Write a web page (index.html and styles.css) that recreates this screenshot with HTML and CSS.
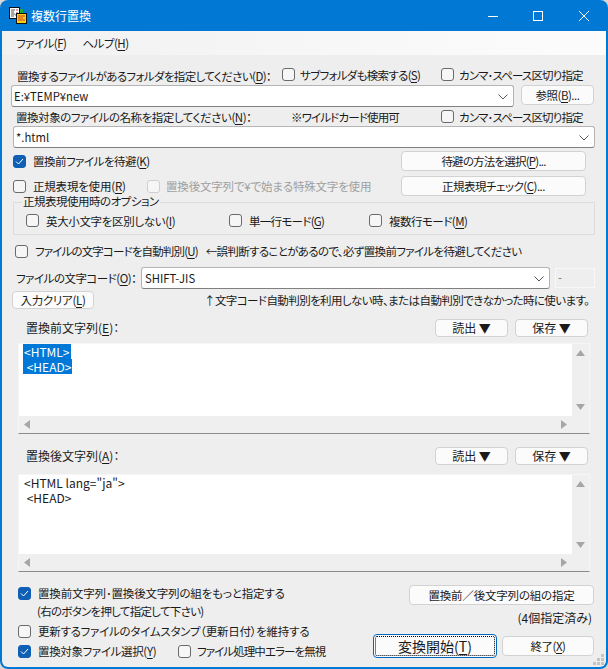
FILE: index.html
```html
<!DOCTYPE html>
<html lang="ja">
<head>
  <meta charset="UTF-8">
  <title>複数行置換</title>
  <link rel="stylesheet" href="styles.css">
</head>
<body>
  <div class="window">
    <div class="titlebar">
      <svg class="app-icon" width="18" height="17" viewBox="0 0 18 17">
        <rect x="0.5" y="0.5" width="10" height="11" fill="#fff" stroke="#111"/>
        <path d="M2 3h4M2 5h3M2 7h4M2 9h3" stroke="#555"/>
        <path d="M7 3h2M7 6h2M6 8h2" stroke="#e0304a"/>
        <rect x="7.5" y="6.5" width="10" height="10" fill="#f5d312" stroke="#111"/>
        <rect x="11" y="2" width="3" height="4" fill="#22a83a"/>
        <path d="M9 9h7M9 11h5M9 13h7" stroke="#d9372a"/>
      </svg>
      <span class="title">複数行置換</span>
      <svg class="win-btn btn-min" width="10" height="10" viewBox="0 0 10 10"><path d="M0 5.5h10" stroke="#fff"/></svg>
      <svg class="win-btn btn-max" width="10" height="10" viewBox="0 0 10 10"><rect x="0.5" y="0.5" width="9" height="9" fill="none" stroke="#fff"/></svg>
      <svg class="win-btn btn-close" width="10" height="10" viewBox="0 0 10 10"><path d="M0 0l10 10M10 0L0 10" stroke="#fff"/></svg>
    </div>
    <div class="menubar">
      <span class="menu-item">ファイル(<u>F</u>)</span>
      <span class="menu-item">ヘルプ(<u>H</u>)</span>
    </div>
    <div class="content">
      <div class="row row-folder-label">
        <span class="lbl lbl-folder">置換するファイルがあるフォルダを指定してください(<u>D</u>)：</span>
        <label class="check chk-sub"><span class="box"></span>サブフォルダも検索する(<u>S</u>)</label>
        <label class="check chk-comma"><span class="box"></span>カンマ･スペース区切り指定</label>
      </div>
      <div class="row row-folder">
        <div class="combo combo-folder">E:¥TEMP¥new
          <svg class="chev" width="10" height="6" viewBox="0 0 10 6"><path d="M0.5 0.5L5 5l4.5-4.5" fill="none" stroke="#555"/></svg>
        </div>
        <button class="btn btn-browse">参照(<u>B</u>)...</button>
      </div>
      <div class="row row-name-label">
        <span class="lbl lbl-name">置換対象のファイルの名称を指定してください(<u>N</u>)：</span>
        <span class="lbl lbl-wild">※ワイルドカード使用可</span>
        <label class="check chk-comma"><span class="box"></span>カンマ･スペース区切り指定</label>
      </div>
      <div class="row row-name">
        <div class="combo combo-name">*.html
          <svg class="chev" width="10" height="6" viewBox="0 0 10 6"><path d="M0.5 0.5L5 5l4.5-4.5" fill="none" stroke="#555"/></svg>
        </div>
      </div>
      <div class="row row-backup">
        <label class="check"><span class="box on"><svg width="9" height="7" viewBox="0 0 9 7"><path d="M1 3.500L3.500 6 8 1" fill="none" stroke="#fff"/></svg></span>置換前ファイルを待避(<u>K</u>)</label>
        <button class="btn btn-side btn-method">待避の方法を選択(<u>P</u>)...</button>
      </div>
      <div class="row row-regex">
        <label class="check chk-regex"><span class="box"></span>正規表現を使用(<u>R</u>)</label>
        <label class="check disabled chk-escape"><span class="box"></span>置換後文字列で¥で始まる特殊文字を使用</label>
        <button class="btn btn-side">正規表現チェック(<u>C</u>)...</button>
      </div>
      <fieldset class="group">
        <legend>正規表現使用時のオプション</legend>
        <label class="check opt1"><span class="box"></span>英大小文字を区別しない(<u>I</u>)</label>
        <label class="check opt2"><span class="box"></span>単一行モード(<u>G</u>)</label>
        <label class="check opt3"><span class="box"></span>複数行モード(<u>M</u>)</label>
      </fieldset>
      <div class="row row-auto">
        <label class="check chk-auto"><span class="box"></span>ファイルの文字コードを自動判別(<u>U</u>)</label>
        <span class="lbl lbl-warn">←誤判断することがあるので、必ず置換前ファイルを待避してください</span>
      </div>
      <div class="row row-code">
        <span class="lbl lbl-code">ファイルの文字コード(<u>O</u>)：</span>
        <div class="combo combo-code">SHIFT-JIS
          <svg class="chev" width="10" height="6" viewBox="0 0 10 6"><path d="M0.5 0.5L5 5l4.5-4.5" fill="none" stroke="#555"/></svg>
        </div>
        <div class="code-out">-</div>
      </div>
      <div class="row row-clear">
        <button class="btn btn-clear">入力クリア(<u>L</u>)</button>
        <span class="lbl lbl-hint">↑文字コード自動判別を利用しない時、または自動判別できなかった時に使います。</span>
      </div>

      <div class="row row-memo-head">
        <span class="lbl lbl-memo">置換前文字列(<u>E</u>)：</span>
        <button class="btn btn-load">読出 ▼</button>
        <button class="btn btn-save">保存 ▼</button>
      </div>
      <div class="memo memo-before">
        <div class="memo-text"><span class="sel">&lt;HTML&gt;</span><br><span class="sel">&nbsp;&lt;HEAD&gt;</span></div>
        <div class="vbar">
          <svg width="9" height="6" viewBox="0 0 9 6"><path d="M4.500 0L9 6H0z" fill="#a6a6a6"/></svg>
          <svg width="9" height="6" viewBox="0 0 9 6"><path d="M4.500 6L9 0H0z" fill="#a6a6a6"/></svg>
        </div>
        <div class="hbar">
          <svg width="6" height="9" viewBox="0 0 6 9"><path d="M0 4.500L6 0v9z" fill="#a6a6a6"/></svg>
          <svg width="6" height="9" viewBox="0 0 6 9"><path d="M6 4.500L0 0v9z" fill="#a6a6a6"/></svg>
        </div>
        <div class="corner"></div>
      </div>

      <div class="row row-memo-head head-after">
        <span class="lbl lbl-memo">置換後文字列(<u>A</u>)：</span>
        <button class="btn btn-load">読出 ▼</button>
        <button class="btn btn-save">保存 ▼</button>
      </div>
      <div class="memo memo-after">
        <div class="memo-text">&lt;HTML lang="ja"&gt;<br>&nbsp;&lt;HEAD&gt;</div>
        <div class="vbar">
          <svg width="9" height="6" viewBox="0 0 9 6"><path d="M4.500 0L9 6H0z" fill="#a6a6a6"/></svg>
          <svg width="9" height="6" viewBox="0 0 9 6"><path d="M4.500 6L9 0H0z" fill="#a6a6a6"/></svg>
        </div>
        <div class="hbar">
          <svg width="6" height="9" viewBox="0 0 6 9"><path d="M0 4.500L6 0v9z" fill="#a6a6a6"/></svg>
          <svg width="6" height="9" viewBox="0 0 6 9"><path d="M6 4.500L0 0v9z" fill="#a6a6a6"/></svg>
        </div>
        <div class="corner"></div>
      </div>

      <div class="bottom">
        <div class="bottom-left">
          <label class="check line chk-more"><span class="box on"><svg width="9" height="7" viewBox="0 0 9 7"><path d="M1 3.500L3.500 6 8 1" fill="none" stroke="#fff"/></svg></span>置換前文字列･置換後文字列の組をもっと指定する</label>
          <div class="lbl line note">(右のボタンを押して指定して下さい)</div>
          <label class="check line line-stamp"><span class="box"></span>更新するファイルのタイムスタンプ（更新日付）を維持する</label>
          <div class="line line-last">
            <label class="check chk-target"><span class="box on"><svg width="9" height="7" viewBox="0 0 9 7"><path d="M1 3.500L3.500 6 8 1" fill="none" stroke="#fff"/></svg></span>置換対象ファイル選択(<u>Y</u>)</label>
            <label class="check chk-ignore"><span class="box"></span>ファイル処理中エラーを無視</label>
          </div>
        </div>
        <div class="bottom-right">
          <button class="btn btn-pairs">置換前／後文字列の組の指定</button>
          <div class="lbl pairs-count">(4個指定済み)</div>
          <div class="actions">
            <button class="btn btn-start"><span class="focus-ring">変換開始(<u>T</u>)</span></button>
            <button class="btn btn-end">終了(<u>X</u>)</button>
          </div>
        </div>
      </div>
      <svg class="grip" width="12" height="12" viewBox="0 0 12 12">
        <path d="M8 0h3v3H8zM4 4h3v3H4zM8 4h3v3H8zM0 8h3v3H0zM4 8h3v3H4zM8 8h3v3H8z" fill="#c4c4c4"/>
      </svg>
    </div>
  </div>
</body>
</html>
```

FILE: styles.css
```css
html, body {
  margin: 0;
  height: 100%;
  background: #d8d8d8;
}
body {
  font-family: "Noto Sans CJK JP", "Noto Sans", sans-serif;
  font-size: 11.5px;
  font-feature-settings: "palt";
  color: #1a1a1a;
  line-height: 16px;
}
u {
  text-underline-offset: 2px;
}
.window {
  width: 608px;
  height: 669px;
  box-sizing: border-box;
  display: flex;
  flex-direction: column;
  background: #0078d4;
  border-radius: 8px;
  overflow: hidden;
  padding: 0 2px 2px;
}
.titlebar {
  height: 31px;
  flex: none;
  display: flex;
  align-items: center;
  margin: 0 -2px;
  color: #fff;
}
.app-icon {
  margin-left: 9px;
}
.title {
  margin-left: 4px;
  font-size: 12px;
}
.win-btn {
  flex: none;
}
.btn-min {
  margin-left: auto;
}
.btn-max {
  margin-left: 35px;
}
.btn-close {
  margin-left: 36px;
  margin-right: 19px;
}
.menubar {
  height: 24px;
  flex: none;
  display: flex;
  align-items: center;
  background: linear-gradient(to right, #f1f1f1, #fcfcfc);
  padding-left: 14px;
  gap: 20px;
}
.menu-item {
  margin-right: -4px;
}
.menu-item,
.lbl,
.check,
.btn,
.group legend {
  letter-spacing: -0.5px;
}
.content {
  flex: 1;
  position: relative;
  background: #eeeeee;
  padding-top: 12px;
  border-radius: 0 0 6px 6px;
}

.row {
  display: flex;
  align-items: center;
}
.lbl {
  white-space: nowrap;
}
.check {
  display: inline-flex;
  align-items: center;
  white-space: nowrap;
}
.box {
  flex: none;
  box-sizing: border-box;
  width: 13px;
  height: 13px;
  border: 1px solid #6a6a6a;
  border-radius: 3px;
  background: #f6f6f6;
  margin-right: 7px;
  display: flex;
  align-items: center;
  justify-content: center;
}
.box.on {
  background: #0f5fb5;
  border-color: #0f5fb5;
}
.disabled {
  color: #a0a0a0;
}
.disabled .box {
  border-color: #cfcfcf;
}

.btn {
  font: inherit;
  font-feature-settings: inherit;
  color: inherit;
  box-sizing: border-box;
  background: #fbfbfb;
  border: 1px solid #d2d2d2;
  border-radius: 4px;
  padding: 0;
  white-space: nowrap;
}
.combo {
  position: relative;
  box-sizing: border-box;
  height: 22px;
  background: #fff;
  border: 1px solid #b4b4b4;
  border-bottom-color: #808080;
  border-radius: 3px;
  font-size: 11.3px;
  line-height: 20px;
  padding-left: 2px;
}
.chev {
  position: absolute;
  right: 5px;
  top: 8px;
}

.row-folder-label {
  height: 18px;
  padding-left: 15px;
}
.row-folder-label .check {
  margin-bottom: 3px;
}
.lbl-folder {
  width: 265px;
  letter-spacing: -0.62px;
}
.chk-sub {
  width: 159px;
  letter-spacing: -0.7px;
}
.chk-sub .box,
.chk-comma .box {
  margin-right: 5px;
}
.chk-comma {
  letter-spacing: -0.85px;
}
.row-folder {
  height: 22px;
  padding-left: 9px;
  align-items: flex-start;
}
.combo-folder {
  width: 503px;
}
.btn-browse {
  width: 73px;
  height: 20px;
  margin-left: 7px;
}
.row-name-label {
  height: 19px;
  padding-left: 14px;
}
.lbl-name {
  width: 275px;
  letter-spacing: -0.45px;
}
.lbl-wild {
  width: 150px;
  letter-spacing: -0.85px;
}
.row-name {
  height: 22px;
  padding-left: 11px;
}
.combo-name {
  width: 582px;
}
.row-backup {
  height: 20px;
  margin-top: 3px;
  padding-left: 11px;
}
.row-backup .btn-side {
  margin-left: auto;
}
.btn-side {
  width: 185px;
  height: 20px;
  margin-right: 20px;
}
.btn-method {
  letter-spacing: -0.8px;
}
.row-regex {
  height: 20px;
  margin-top: 5px;
  padding-left: 11px;
}
.chk-regex {
  width: 134px;
  letter-spacing: -0.2px;
}
.chk-escape {
  letter-spacing: -0.18px;
}
.chk-escape .box {
  margin-right: 6px;
}
.row-regex .btn-side {
  margin-left: auto;
}

.group {
  margin: -1px 11px 0;
  height: 40px;
  box-sizing: border-box;
  border: 1px solid #dcdcdc;
  padding: 0 0 2px;
  display: flex;
  align-items: center;
  min-width: 0;
}
.group legend {
  margin-left: 8px;
  padding: 0 1px 2px;
  line-height: 12px;
}
.opt1 {
  margin-left: 12px;
  width: 203px;
  letter-spacing: -0.35px;
}
.opt2 {
  width: 140px;
  letter-spacing: -0.7px;
}

.row-auto {
  height: 18px;
  margin-top: 7px;
  padding-left: 13px;
}
.chk-auto {
  letter-spacing: -0.85px;
}
.lbl-warn {
  margin-left: 8px;
  letter-spacing: -0.66px;
}
.row-code {
  height: 22px;
  margin-top: 7px;
  padding-left: 14px;
}
.lbl-code {
  width: 125px;
}
.combo-code {
  width: 409px;
  padding-left: 3px;
}
.code-out {
  box-sizing: border-box;
  width: 40px;
  height: 20px;
  margin-left: 5px;
  border: 1px solid #f8f8f8;
  color: #777;
  padding-left: 2px;
}
.row-clear {
  height: 18px;
  margin-top: 2px;
  padding-left: 10px;
}
.btn-clear {
  width: 82px;
  height: 18px;
  line-height: 16px;
  letter-spacing: -0.3px;
}
.lbl-hint {
  margin-left: 110px;
  letter-spacing: -0.58px;
}

.row-memo-head {
  height: 18px;
  margin-top: 10px;
  padding-left: 24px;
}
.head-after {
  margin-top: 13px;
}
.lbl-memo {
  width: 409px;
  font-size: 12px;
  letter-spacing: 0;
}
.btn-load,
.btn-save {
  width: 73px;
  height: 18px;
  font-size: 12px;
  line-height: 16px;
  letter-spacing: 0;
}
.btn-save {
  margin-left: 7px;
}

.memo {
  display: grid;
  grid-template-columns: 1fr 17px;
  grid-template-rows: 1fr 17px;
  box-sizing: border-box;
  margin-left: 16px;
  width: 572px;
  margin-top: 6px;
  border-top: 1px solid #f6f6f6;
  border-left: 1px solid #f6f6f6;
  border-right: 1px solid #f6f6f6;
  border-bottom: 1px solid #8c8c8c;
}
.memo-before {
  height: 91px;
}
.memo-after {
  height: 98px;
  margin-top: 9px;
}
.memo-text {
  background: #fff;
  padding: 0 5px;
  font-size: 12px;
  line-height: 15px;
}
.sel {
  background: #0078d7;
  color: #fff;
  display: inline-block;
  line-height: 15px;
  vertical-align: top;
  padding: 0 1px;
  margin-left: -1px;
}
.vbar {
  background: #efefef;
  display: flex;
  flex-direction: column;
  align-items: center;
  justify-content: space-between;
  padding: 6px 0;
}
.hbar {
  background: #efefef;
  display: flex;
  align-items: center;
  justify-content: space-between;
  padding: 0 5px;
}
.corner {
  background: #efefef;
}

.bottom {
  display: flex;
  justify-content: space-between;
  margin-top: 12px;
  padding-right: 12px;
}
.bottom-left {
  padding-left: 16px;
}
.line {
  display: flex;
  height: 18px;
  align-items: center;
}
.chk-more {
  letter-spacing: -0.18px;
}
.note {
  padding-left: 19px;
  letter-spacing: -0.72px;
}
.line-stamp,
.line-last {
  margin-top: 2px;
}
.line-stamp {
  letter-spacing: -0.25px;
}
.chk-target {
  width: 160px;
  letter-spacing: -0.35px;
}
.chk-ignore {
  letter-spacing: -0.92px;
  margin-left: 0;
}
.chk-ignore .box {
  margin-right: 6px;
}
.bottom-right {
  display: flex;
  flex-direction: column;
  align-items: flex-end;
  padding-top: 1px;
}
.btn-pairs {
  width: 185px;
  height: 20px;
  letter-spacing: -0.2px;
}
.pairs-count {
  margin-top: 5px;
  margin-right: 2px;
  font-size: 12px;
  letter-spacing: 0;
}
.actions {
  display: flex;
  align-items: center;
  margin-top: 8px;
  gap: 5px;
}
.btn-start {
  width: 124px;
  height: 24px;
  font-size: 14px;
  letter-spacing: 0;
  border-color: #0067c0;
  padding: 1px;
}
.focus-ring {
  display: flex;
  align-items: center;
  justify-content: center;
  height: 100%;
  box-sizing: border-box;
  border: 1px dotted #000;
  border-radius: 2px;
}
.btn-end {
  width: 92px;
  height: 20px;
}
.grip {
  position: absolute;
  right: 1px;
  bottom: 1px;
}
```
